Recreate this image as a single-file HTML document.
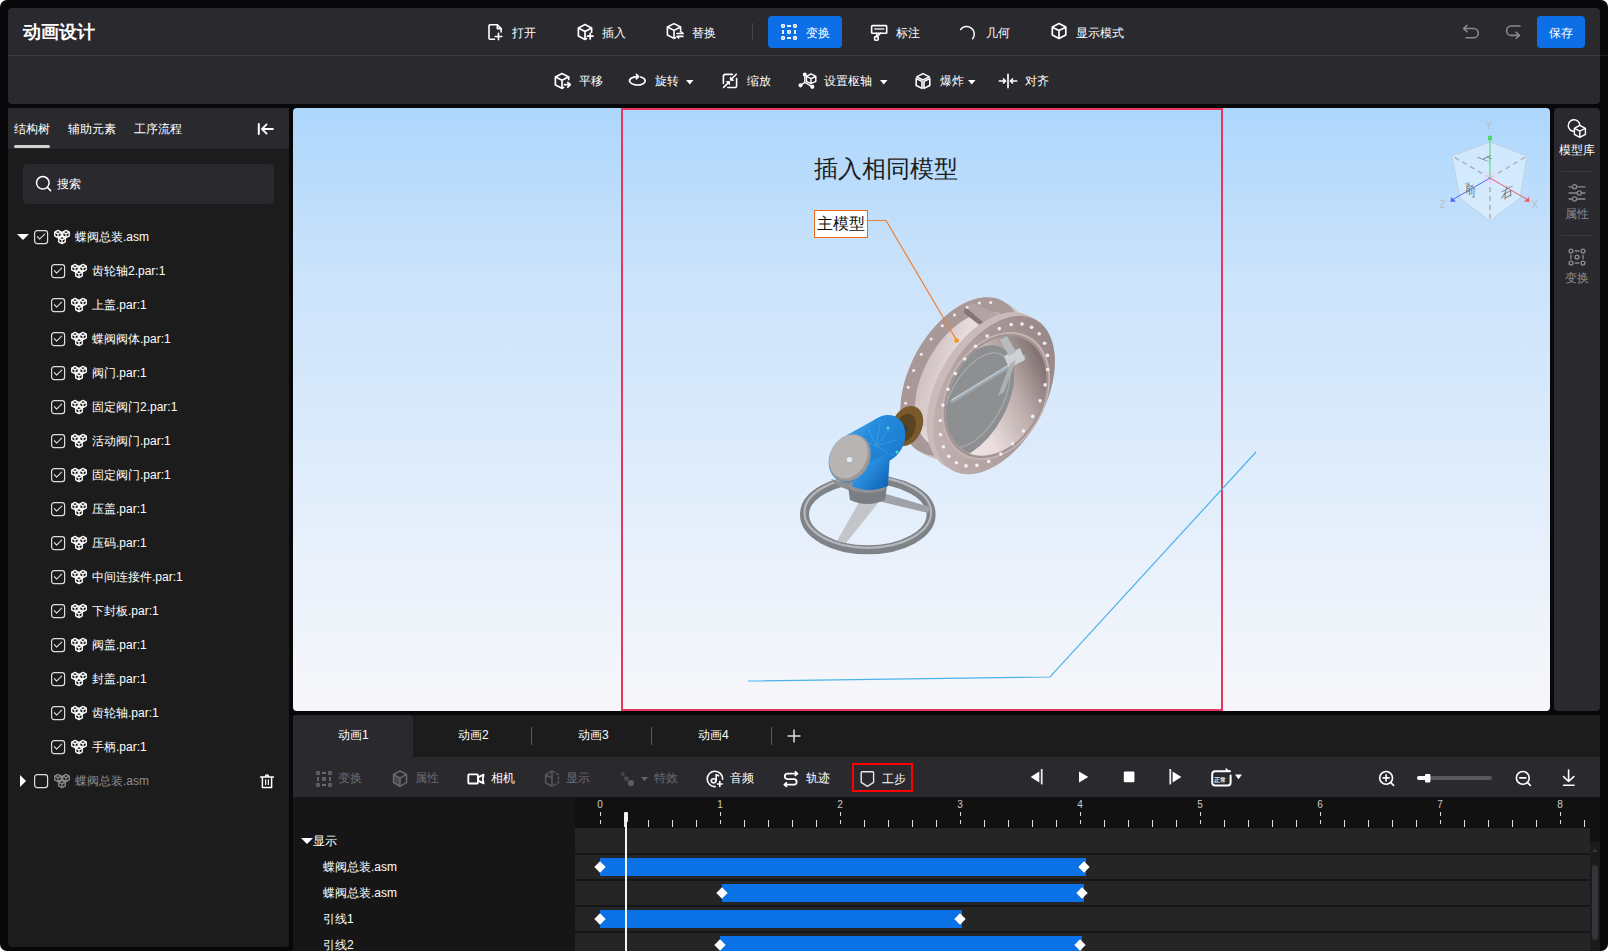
<!DOCTYPE html>
<html><head><meta charset="utf-8">
<style>
*{box-sizing:border-box;margin:0;padding:0}
html,body{width:1608px;height:951px;overflow:hidden;background:#fff}
body{font-family:"Liberation Sans",sans-serif;color:#fff;font-size:12px;position:relative}
.abs{position:absolute}
#win{position:absolute;left:0;top:0;width:1608px;height:951px;background:#08080a;border-radius:7px;overflow:hidden}
.t{position:absolute;white-space:nowrap;font-size:12px;line-height:14px}
svg{position:absolute;overflow:visible}
</style></head><body>
<div id="win">
<div class="abs" style="left:8px;top:8px;width:1592px;height:96px;background:#2a292e;border-radius:4px"></div>
<div class="abs" style="left:8px;top:55px;width:1592px;height:1px;background:#3e3e42;"></div>
<div class="abs" style="left:1600px;top:55px;width:8px;height:1px;background:#202022;"></div>
<div class="abs" style="left:8px;top:108px;width:281px;height:839px;background:#1c1c1c;border-radius:0 0 4px 4px"></div>
<div class="abs" style="left:8px;top:108px;width:281px;height:41px;background:#2a292e;"></div>
<div class="abs" style="left:293px;top:108px;width:1257px;height:603px;background:linear-gradient(180deg,#acd6fc 0%,#b3d9fc 5%,#cbe3fb 28%,#d8e9fb 49%,#eaf1fb 77%,#f7f7fa 100%);border-radius:4px;overflow:hidden"></div>
<div class="abs" style="left:1554px;top:108px;width:46px;height:603px;background:#2a292e;border-radius:4px"></div>
<div class="abs" style="left:293px;top:715px;width:1307px;height:236px;background:#161616;"></div>
<div class="abs" style="left:293px;top:715px;width:1307px;height:42px;background:#1c1c1c;"></div>
<div class="abs" style="left:293px;top:715px;width:120px;height:42px;background:#2a292e;border-radius:4px 4px 0 0"></div>
<div class="abs" style="left:293px;top:757px;width:1307px;height:40px;background:#2a292e;"></div>
<div class="t" style="left:23px;top:22px;font-size:18px;line-height:20px;color:#fff;font-weight:bold;">动画设计</div>
<svg style="left:484px;top:20px;" width="24" height="24" viewBox="0 0 24 24"><g fill="none" stroke="#fff" stroke-width="1.6" stroke-linecap="round" stroke-linejoin="round"><path d="M10.5 19.2 H6 Q5 19.2 5 18.2 V5.8 Q5 4.8 6 4.8 H13.3 L17.1 8.6 V12"/><path d="M13.3 4.8 V8.6 H17.1"/><path d="M11.2 16.5 H17.8 M14.5 13.3 V19.8"/></g></svg>
<div class="t" style="left:512px;top:26px;font-size:12px;line-height:14px;color:#fff;font-weight:500;">打开</div>
<svg style="left:574px;top:20px;" width="24" height="24" viewBox="0 0 24 24"><g fill="none" stroke="#fff" stroke-width="1.7" stroke-linecap="round" stroke-linejoin="round"><path d="M17.6 12.2 V8 L11 4.6 L4.4 8 V16 L11 19.4 L12.6 18.6"/><path d="M4.8 8.2 L11 11.4 L17.2 8.2 M11 11.4 V19"/><path d="M13.4 16.2 H19 M16.2 13.4 V19"/></g></svg>
<div class="t" style="left:602px;top:26px;font-size:12px;line-height:14px;color:#fff;font-weight:500;">插入</div>
<svg style="left:663px;top:19px;" width="24" height="24" viewBox="0 0 24 24"><g fill="none" stroke="#fff" stroke-width="1.6" stroke-linecap="round" stroke-linejoin="round"><path d="M17.6 12.6 V8 L11 4.6 L4.4 8 V16 L11 19.4 L12.4 18.7"/><path d="M4.8 8.2 L11 11.4 L17.2 8.2 M11 11.4 V19"/><path d="M14 14.5 H20.2 L18.4 13 M20 17.4 H14 L15.6 18.9"/></g></svg>
<div class="t" style="left:692px;top:26px;font-size:12px;line-height:14px;color:#fff;font-weight:500;">替换</div>
<div class="abs" style="left:752px;top:23px;width:1px;height:17px;background:#444449;"></div>
<div class="abs" style="left:768px;top:16px;width:74px;height:32px;background:#0d6fe5;border-radius:4px"></div>
<svg style="left:777px;top:20px;" width="24" height="24" viewBox="0 0 24 24"><g fill="none" stroke="#fff" stroke-width="1.4" stroke-linecap="round" stroke-linejoin="round"><rect x="4.7" y="4.7" width="2.6" height="2.6" rx="0.7"/><rect x="16.7" y="4.7" width="2.6" height="2.6" rx="0.7"/><rect x="4.7" y="16.7" width="2.6" height="2.6" rx="0.7"/><rect x="16.7" y="16.7" width="2.6" height="2.6" rx="0.7"/><rect x="10.7" y="10.7" width="2.6" height="2.6" rx="0.7"/><path d="M10 6 H14 M10 18 H14 M6 10 V14 M18 10 V14" stroke-linecap="butt" stroke-width="1.8"/></g></svg>
<div class="t" style="left:806px;top:26px;font-size:12px;line-height:14px;color:#fff;font-weight:500;">变换</div>
<svg style="left:867px;top:20px;" width="24" height="24" viewBox="0 0 24 24"><g fill="none" stroke="#fff" stroke-width="1.6" stroke-linecap="round" stroke-linejoin="round"><rect x="4.6" y="5.6" width="15.1" height="7.6" rx="0.8"/><path d="M7.8 9 H16.8" stroke="#ddd" stroke-width="1.5"/><path d="M9.8 13.2 L9.5 16.5 M13.6 13.2 L10.2 16.3"/><rect x="7.6" y="16.6" width="3.6" height="3.6" rx="1"/></g></svg>
<div class="t" style="left:896px;top:26px;font-size:12px;line-height:14px;color:#fff;font-weight:500;">标注</div>
<svg style="left:956px;top:20px;" width="24" height="24" viewBox="0 0 24 24"><g fill="none" stroke="#fff" stroke-width="1.5" stroke-linecap="round" stroke-linejoin="round"><path d="M4.6 9.5 A7.6 7.6 0 0 1 16.7 18.8"/></g></svg>
<div class="t" style="left:986px;top:26px;font-size:12px;line-height:14px;color:#fff;font-weight:500;">几何</div>
<svg style="left:1047px;top:19px;" width="24" height="24" viewBox="0 0 24 24"><g fill="none" stroke="#fff" stroke-width="1.7" stroke-linecap="round" stroke-linejoin="round"><path d="M12 4.6 L18.8 8.1 V16 L12 19.6 L5.3 16 V8.1 Z M5.8 8.4 L12 11.6 L18.3 8.4 M12 11.6 V19.2"/></g></svg>
<div class="t" style="left:1076px;top:26px;font-size:12px;line-height:14px;color:#fff;font-weight:500;">显示模式</div>
<svg style="left:1459px;top:20px;" width="24" height="24" viewBox="0 0 24 24"><g fill="none" stroke="#8a8a8e" stroke-width="1.6" stroke-linecap="round" stroke-linejoin="round"><path d="M8 5.3 L4.6 8.5 L8 11.6 M4.8 8.5 H14.6 A4.6 4.6 0 0 1 14.6 17.8 H7"/></g></svg>
<svg style="left:1501px;top:20px;" width="24" height="24" viewBox="0 0 24 24"><g fill="none" stroke="#8a8a8e" stroke-width="1.6" stroke-linecap="round" stroke-linejoin="round"><path d="M19 6 H10.3 A4.7 4.7 0 0 0 10.3 15.4 H18.2 M15.2 12.4 L18.4 15.4 L15.2 18.5"/></g></svg>
<div class="abs" style="left:1537px;top:16px;width:48px;height:32px;background:#0d6fe5;border-radius:4px"></div>
<div class="t" style="left:1549px;top:26px;font-size:12px;line-height:14px;color:#fff;font-weight:500;">保存</div>
<svg style="left:551px;top:69px;" width="24" height="24" viewBox="0 0 24 24"><g fill="none" stroke="#fff" stroke-width="1.7" stroke-linecap="round" stroke-linejoin="round"><path d="M17.7 10.4 V7.9 L11 4.5 L4.4 7.9 V15.9 L11 19.3 L12.6 18.5"/><path d="M4.8 8.1 L11 11.3 L17.3 8.1 M11 11.3 V19"/><path d="M13.4 15.7 H19.2 M16.8 13.3 L19.3 15.7 L16.8 18.1"/></g></svg>
<div class="t" style="left:579px;top:74px;font-size:12px;line-height:14px;color:#fff;font-weight:500;">平移</div>
<svg style="left:626px;top:69px;" width="24" height="24" viewBox="0 0 24 24"><g fill="none" stroke="#fff" stroke-width="1.6" stroke-linecap="round" stroke-linejoin="round"><path d="M14.7 8 A7.8 4.2 0 1 1 11.8 7.6"/><path d="M10.3 5.3 L12.6 7.6 L10.3 9.8" fill="#fff"/></g></svg>
<div class="t" style="left:655px;top:74px;font-size:12px;line-height:14px;color:#fff;font-weight:500;">旋转</div>
<svg style="left:686px;top:80px;" width="8" height="5" viewBox="0 0 8 5"><path d="M0 0 H7.5 L3.75 4.5 Z" fill="#fff"/></svg>
<svg style="left:718px;top:69px;" width="24" height="24" viewBox="0 0 24 24"><g fill="none" stroke="#fff" stroke-width="1.6" stroke-linecap="round" stroke-linejoin="round"><path d="M14.3 5.4 H7.4 Q5.4 5.4 5.4 7.4 V14.4 M9.8 18.5 H16.6 Q18.6 18.6 18.6 16.6 V9.6"/><path d="M18.3 5.2 L13.2 10.3 M5.6 18.4 L10.8 13.4"/><path d="M12.4 8.6 V11.3 H15.2 Z M11.6 15.4 V12.6 H8.8 Z" fill="#fff" stroke-width="1"/></g></svg>
<div class="t" style="left:747px;top:74px;font-size:12px;line-height:14px;color:#fff;font-weight:500;">缩放</div>
<svg style="left:796px;top:69px;" width="24" height="24" viewBox="0 0 24 24"><g fill="none" stroke="#fff" stroke-width="1.4" stroke-linecap="round" stroke-linejoin="round"><path d="M8.8 5.5 V13.4 L4.5 16.3 M9 13.4 L16.3 17.8"/><circle cx="8.8" cy="5.5" r="1.3" fill="#fff"/><circle cx="4.5" cy="16.3" r="1.4" fill="#fff"/><circle cx="16.3" cy="17.8" r="1.4" fill="#fff"/><path d="M15 4.8 L19.8 7.3 V12.3 L15 14.6 L10.5 12.3 V7.3 Z M10.8 7.5 L15 9.7 L19.5 7.5 M15 9.7 V14.4"/></g></svg>
<div class="t" style="left:824px;top:74px;font-size:12px;line-height:14px;color:#fff;font-weight:500;">设置枢轴</div>
<svg style="left:880px;top:80px;" width="8" height="5" viewBox="0 0 8 5"><path d="M0 0 H7.5 L3.75 4.5 Z" fill="#fff"/></svg>
<svg style="left:911px;top:69px;" width="24" height="24" viewBox="0 0 24 24"><g fill="none" stroke="#fff" stroke-width="1.6" stroke-linecap="round" stroke-linejoin="round"><path d="M12 4.6 L18.4 7.9 L12 11 L5.6 7.9 Z"/><path d="M5.2 9.6 L11 12.4 V19.4 L5.2 16.5 Z M18.8 9.6 L13 12.4 V19.4 L18.8 16.5 Z"/></g></svg>
<div class="t" style="left:940px;top:74px;font-size:12px;line-height:14px;color:#fff;font-weight:500;">爆炸</div>
<svg style="left:968px;top:80px;" width="8" height="5" viewBox="0 0 8 5"><path d="M0 0 H7.5 L3.75 4.5 Z" fill="#fff"/></svg>
<svg style="left:996px;top:69px;" width="24" height="24" viewBox="0 0 24 24"><g fill="none" stroke="#fff" stroke-width="1.7" stroke-linecap="round" stroke-linejoin="round"><path d="M12 5.6 V18.6" stroke="#ddd" stroke-width="2"/><path d="M3.4 12 H9.2 M7.5 10 L9.6 12 L7.5 14 M20.6 12 H14.8 M16.5 10 L14.4 12 L16.5 14"/></g></svg>
<div class="t" style="left:1025px;top:74px;font-size:12px;line-height:14px;color:#fff;font-weight:500;">对齐</div>
<div class="t" style="left:14px;top:122px;font-size:12px;line-height:14px;color:#fff;font-weight:500;">结构树</div>
<div class="t" style="left:68px;top:122px;font-size:12px;line-height:14px;color:#fff;font-weight:500;">辅助元素</div>
<div class="t" style="left:134px;top:122px;font-size:12px;line-height:14px;color:#fff;font-weight:500;">工序流程</div>
<div class="abs" style="left:14px;top:145px;width:36px;height:3px;background:#d0d0d0;border-radius:2px"></div>
<svg style="left:253px;top:117px;" width="24" height="24" viewBox="0 0 24 24"><g fill="none" stroke="#fff" stroke-width="1.8" stroke-linecap="round" stroke-linejoin="round"><path d="M5.8 7 V17" stroke-width="2"/><path d="M13.6 7.4 L9 12 L13.6 16.6 M9.2 12 H20"/></g></svg>
<div class="abs" style="left:23px;top:164px;width:251px;height:40px;background:#2a292e;border-radius:4px"></div>
<svg style="left:31px;top:171px;" width="24" height="24" viewBox="0 0 24 24"><g fill="none" stroke="#fff" stroke-width="1.5" stroke-linecap="round" stroke-linejoin="round"><circle cx="11.8" cy="11.8" r="6.3"/><path d="M16.6 16.6 L19.6 19.6"/></g></svg>
<div class="t" style="left:57px;top:177px;font-size:12px;line-height:14px;color:#fff;font-weight:500;">搜索</div>
<svg style="left:17px;top:234px;" width="12" height="6" viewBox="0 0 12 6"><path d="M0 0 H12 L6 6 Z" fill="#fff"/></svg>
<svg style="left:34px;top:230px;" width="14" height="14" viewBox="0 0 14 14"><rect x="0.6" y="0.6" width="13" height="13" rx="2.6" fill="none" stroke="#ddd" stroke-width="1.2"/><path d="M3.4 6.6 L5.6 9.2 L10.7 4.2" fill="none" stroke="#ddd" stroke-width="1.1" stroke-linecap="round" stroke-linejoin="round"/></svg>
<svg style="left:50px;top:225px;" width="24" height="24" viewBox="0 0 24 24"><g fill="none" stroke="#fff" stroke-width="1.3" stroke-linecap="round" stroke-linejoin="round"><path d="M8 5.4 L11.3 7.1 V10.9 L8 12.6 L4.7 10.9 V7.1 Z M4.9 7.2 L8 8.8 L11.1 7.2 M8 8.8 V12.4"/><path d="M16 5.4 L19.3 7.1 V10.9 L16 12.6 L12.7 10.9 V7.1 Z M12.9 7.2 L16 8.8 L19.1 7.2 M16 8.8 V12.4"/><path d="M12 11.4 L15.3 13.1 V16.9 L12 18.6 L8.7 16.9 V13.1 Z M8.9 13.2 L12 14.8 L15.1 13.2 M12 14.8 V18.4"/></g></svg>
<div class="t" style="left:75px;top:230px;font-size:12px;line-height:14px;color:#fff;font-weight:500;">蝶阀总装.asm</div>
<svg style="left:51px;top:264px;" width="14" height="14" viewBox="0 0 14 14"><rect x="0.6" y="0.6" width="13" height="13" rx="2.6" fill="none" stroke="#ddd" stroke-width="1.2"/><path d="M3.4 6.6 L5.6 9.2 L10.7 4.2" fill="none" stroke="#ddd" stroke-width="1.1" stroke-linecap="round" stroke-linejoin="round"/></svg>
<svg style="left:67px;top:259px;" width="24" height="24" viewBox="0 0 24 24"><g fill="none" stroke="#fff" stroke-width="1.3" stroke-linecap="round" stroke-linejoin="round"><path d="M8 5.4 L11.3 7.1 V10.9 L8 12.6 L4.7 10.9 V7.1 Z M4.9 7.2 L8 8.8 L11.1 7.2 M8 8.8 V12.4"/><path d="M16 5.4 L19.3 7.1 V10.9 L16 12.6 L12.7 10.9 V7.1 Z M12.9 7.2 L16 8.8 L19.1 7.2 M16 8.8 V12.4"/><path d="M12 11.4 L15.3 13.1 V16.9 L12 18.6 L8.7 16.9 V13.1 Z M8.9 13.2 L12 14.8 L15.1 13.2 M12 14.8 V18.4"/></g></svg>
<div class="t" style="left:92px;top:264px;font-size:12px;line-height:14px;color:#fff;font-weight:500;">齿轮轴2.par:1</div>
<svg style="left:51px;top:298px;" width="14" height="14" viewBox="0 0 14 14"><rect x="0.6" y="0.6" width="13" height="13" rx="2.6" fill="none" stroke="#ddd" stroke-width="1.2"/><path d="M3.4 6.6 L5.6 9.2 L10.7 4.2" fill="none" stroke="#ddd" stroke-width="1.1" stroke-linecap="round" stroke-linejoin="round"/></svg>
<svg style="left:67px;top:293px;" width="24" height="24" viewBox="0 0 24 24"><g fill="none" stroke="#fff" stroke-width="1.3" stroke-linecap="round" stroke-linejoin="round"><path d="M8 5.4 L11.3 7.1 V10.9 L8 12.6 L4.7 10.9 V7.1 Z M4.9 7.2 L8 8.8 L11.1 7.2 M8 8.8 V12.4"/><path d="M16 5.4 L19.3 7.1 V10.9 L16 12.6 L12.7 10.9 V7.1 Z M12.9 7.2 L16 8.8 L19.1 7.2 M16 8.8 V12.4"/><path d="M12 11.4 L15.3 13.1 V16.9 L12 18.6 L8.7 16.9 V13.1 Z M8.9 13.2 L12 14.8 L15.1 13.2 M12 14.8 V18.4"/></g></svg>
<div class="t" style="left:92px;top:298px;font-size:12px;line-height:14px;color:#fff;font-weight:500;">上盖.par:1</div>
<svg style="left:51px;top:332px;" width="14" height="14" viewBox="0 0 14 14"><rect x="0.6" y="0.6" width="13" height="13" rx="2.6" fill="none" stroke="#ddd" stroke-width="1.2"/><path d="M3.4 6.6 L5.6 9.2 L10.7 4.2" fill="none" stroke="#ddd" stroke-width="1.1" stroke-linecap="round" stroke-linejoin="round"/></svg>
<svg style="left:67px;top:327px;" width="24" height="24" viewBox="0 0 24 24"><g fill="none" stroke="#fff" stroke-width="1.3" stroke-linecap="round" stroke-linejoin="round"><path d="M8 5.4 L11.3 7.1 V10.9 L8 12.6 L4.7 10.9 V7.1 Z M4.9 7.2 L8 8.8 L11.1 7.2 M8 8.8 V12.4"/><path d="M16 5.4 L19.3 7.1 V10.9 L16 12.6 L12.7 10.9 V7.1 Z M12.9 7.2 L16 8.8 L19.1 7.2 M16 8.8 V12.4"/><path d="M12 11.4 L15.3 13.1 V16.9 L12 18.6 L8.7 16.9 V13.1 Z M8.9 13.2 L12 14.8 L15.1 13.2 M12 14.8 V18.4"/></g></svg>
<div class="t" style="left:92px;top:332px;font-size:12px;line-height:14px;color:#fff;font-weight:500;">蝶阀阀体.par:1</div>
<svg style="left:51px;top:366px;" width="14" height="14" viewBox="0 0 14 14"><rect x="0.6" y="0.6" width="13" height="13" rx="2.6" fill="none" stroke="#ddd" stroke-width="1.2"/><path d="M3.4 6.6 L5.6 9.2 L10.7 4.2" fill="none" stroke="#ddd" stroke-width="1.1" stroke-linecap="round" stroke-linejoin="round"/></svg>
<svg style="left:67px;top:361px;" width="24" height="24" viewBox="0 0 24 24"><g fill="none" stroke="#fff" stroke-width="1.3" stroke-linecap="round" stroke-linejoin="round"><path d="M8 5.4 L11.3 7.1 V10.9 L8 12.6 L4.7 10.9 V7.1 Z M4.9 7.2 L8 8.8 L11.1 7.2 M8 8.8 V12.4"/><path d="M16 5.4 L19.3 7.1 V10.9 L16 12.6 L12.7 10.9 V7.1 Z M12.9 7.2 L16 8.8 L19.1 7.2 M16 8.8 V12.4"/><path d="M12 11.4 L15.3 13.1 V16.9 L12 18.6 L8.7 16.9 V13.1 Z M8.9 13.2 L12 14.8 L15.1 13.2 M12 14.8 V18.4"/></g></svg>
<div class="t" style="left:92px;top:366px;font-size:12px;line-height:14px;color:#fff;font-weight:500;">阀门.par:1</div>
<svg style="left:51px;top:400px;" width="14" height="14" viewBox="0 0 14 14"><rect x="0.6" y="0.6" width="13" height="13" rx="2.6" fill="none" stroke="#ddd" stroke-width="1.2"/><path d="M3.4 6.6 L5.6 9.2 L10.7 4.2" fill="none" stroke="#ddd" stroke-width="1.1" stroke-linecap="round" stroke-linejoin="round"/></svg>
<svg style="left:67px;top:395px;" width="24" height="24" viewBox="0 0 24 24"><g fill="none" stroke="#fff" stroke-width="1.3" stroke-linecap="round" stroke-linejoin="round"><path d="M8 5.4 L11.3 7.1 V10.9 L8 12.6 L4.7 10.9 V7.1 Z M4.9 7.2 L8 8.8 L11.1 7.2 M8 8.8 V12.4"/><path d="M16 5.4 L19.3 7.1 V10.9 L16 12.6 L12.7 10.9 V7.1 Z M12.9 7.2 L16 8.8 L19.1 7.2 M16 8.8 V12.4"/><path d="M12 11.4 L15.3 13.1 V16.9 L12 18.6 L8.7 16.9 V13.1 Z M8.9 13.2 L12 14.8 L15.1 13.2 M12 14.8 V18.4"/></g></svg>
<div class="t" style="left:92px;top:400px;font-size:12px;line-height:14px;color:#fff;font-weight:500;">固定阀门2.par:1</div>
<svg style="left:51px;top:434px;" width="14" height="14" viewBox="0 0 14 14"><rect x="0.6" y="0.6" width="13" height="13" rx="2.6" fill="none" stroke="#ddd" stroke-width="1.2"/><path d="M3.4 6.6 L5.6 9.2 L10.7 4.2" fill="none" stroke="#ddd" stroke-width="1.1" stroke-linecap="round" stroke-linejoin="round"/></svg>
<svg style="left:67px;top:429px;" width="24" height="24" viewBox="0 0 24 24"><g fill="none" stroke="#fff" stroke-width="1.3" stroke-linecap="round" stroke-linejoin="round"><path d="M8 5.4 L11.3 7.1 V10.9 L8 12.6 L4.7 10.9 V7.1 Z M4.9 7.2 L8 8.8 L11.1 7.2 M8 8.8 V12.4"/><path d="M16 5.4 L19.3 7.1 V10.9 L16 12.6 L12.7 10.9 V7.1 Z M12.9 7.2 L16 8.8 L19.1 7.2 M16 8.8 V12.4"/><path d="M12 11.4 L15.3 13.1 V16.9 L12 18.6 L8.7 16.9 V13.1 Z M8.9 13.2 L12 14.8 L15.1 13.2 M12 14.8 V18.4"/></g></svg>
<div class="t" style="left:92px;top:434px;font-size:12px;line-height:14px;color:#fff;font-weight:500;">活动阀门.par:1</div>
<svg style="left:51px;top:468px;" width="14" height="14" viewBox="0 0 14 14"><rect x="0.6" y="0.6" width="13" height="13" rx="2.6" fill="none" stroke="#ddd" stroke-width="1.2"/><path d="M3.4 6.6 L5.6 9.2 L10.7 4.2" fill="none" stroke="#ddd" stroke-width="1.1" stroke-linecap="round" stroke-linejoin="round"/></svg>
<svg style="left:67px;top:463px;" width="24" height="24" viewBox="0 0 24 24"><g fill="none" stroke="#fff" stroke-width="1.3" stroke-linecap="round" stroke-linejoin="round"><path d="M8 5.4 L11.3 7.1 V10.9 L8 12.6 L4.7 10.9 V7.1 Z M4.9 7.2 L8 8.8 L11.1 7.2 M8 8.8 V12.4"/><path d="M16 5.4 L19.3 7.1 V10.9 L16 12.6 L12.7 10.9 V7.1 Z M12.9 7.2 L16 8.8 L19.1 7.2 M16 8.8 V12.4"/><path d="M12 11.4 L15.3 13.1 V16.9 L12 18.6 L8.7 16.9 V13.1 Z M8.9 13.2 L12 14.8 L15.1 13.2 M12 14.8 V18.4"/></g></svg>
<div class="t" style="left:92px;top:468px;font-size:12px;line-height:14px;color:#fff;font-weight:500;">固定阀门.par:1</div>
<svg style="left:51px;top:502px;" width="14" height="14" viewBox="0 0 14 14"><rect x="0.6" y="0.6" width="13" height="13" rx="2.6" fill="none" stroke="#ddd" stroke-width="1.2"/><path d="M3.4 6.6 L5.6 9.2 L10.7 4.2" fill="none" stroke="#ddd" stroke-width="1.1" stroke-linecap="round" stroke-linejoin="round"/></svg>
<svg style="left:67px;top:497px;" width="24" height="24" viewBox="0 0 24 24"><g fill="none" stroke="#fff" stroke-width="1.3" stroke-linecap="round" stroke-linejoin="round"><path d="M8 5.4 L11.3 7.1 V10.9 L8 12.6 L4.7 10.9 V7.1 Z M4.9 7.2 L8 8.8 L11.1 7.2 M8 8.8 V12.4"/><path d="M16 5.4 L19.3 7.1 V10.9 L16 12.6 L12.7 10.9 V7.1 Z M12.9 7.2 L16 8.8 L19.1 7.2 M16 8.8 V12.4"/><path d="M12 11.4 L15.3 13.1 V16.9 L12 18.6 L8.7 16.9 V13.1 Z M8.9 13.2 L12 14.8 L15.1 13.2 M12 14.8 V18.4"/></g></svg>
<div class="t" style="left:92px;top:502px;font-size:12px;line-height:14px;color:#fff;font-weight:500;">压盖.par:1</div>
<svg style="left:51px;top:536px;" width="14" height="14" viewBox="0 0 14 14"><rect x="0.6" y="0.6" width="13" height="13" rx="2.6" fill="none" stroke="#ddd" stroke-width="1.2"/><path d="M3.4 6.6 L5.6 9.2 L10.7 4.2" fill="none" stroke="#ddd" stroke-width="1.1" stroke-linecap="round" stroke-linejoin="round"/></svg>
<svg style="left:67px;top:531px;" width="24" height="24" viewBox="0 0 24 24"><g fill="none" stroke="#fff" stroke-width="1.3" stroke-linecap="round" stroke-linejoin="round"><path d="M8 5.4 L11.3 7.1 V10.9 L8 12.6 L4.7 10.9 V7.1 Z M4.9 7.2 L8 8.8 L11.1 7.2 M8 8.8 V12.4"/><path d="M16 5.4 L19.3 7.1 V10.9 L16 12.6 L12.7 10.9 V7.1 Z M12.9 7.2 L16 8.8 L19.1 7.2 M16 8.8 V12.4"/><path d="M12 11.4 L15.3 13.1 V16.9 L12 18.6 L8.7 16.9 V13.1 Z M8.9 13.2 L12 14.8 L15.1 13.2 M12 14.8 V18.4"/></g></svg>
<div class="t" style="left:92px;top:536px;font-size:12px;line-height:14px;color:#fff;font-weight:500;">压码.par:1</div>
<svg style="left:51px;top:570px;" width="14" height="14" viewBox="0 0 14 14"><rect x="0.6" y="0.6" width="13" height="13" rx="2.6" fill="none" stroke="#ddd" stroke-width="1.2"/><path d="M3.4 6.6 L5.6 9.2 L10.7 4.2" fill="none" stroke="#ddd" stroke-width="1.1" stroke-linecap="round" stroke-linejoin="round"/></svg>
<svg style="left:67px;top:565px;" width="24" height="24" viewBox="0 0 24 24"><g fill="none" stroke="#fff" stroke-width="1.3" stroke-linecap="round" stroke-linejoin="round"><path d="M8 5.4 L11.3 7.1 V10.9 L8 12.6 L4.7 10.9 V7.1 Z M4.9 7.2 L8 8.8 L11.1 7.2 M8 8.8 V12.4"/><path d="M16 5.4 L19.3 7.1 V10.9 L16 12.6 L12.7 10.9 V7.1 Z M12.9 7.2 L16 8.8 L19.1 7.2 M16 8.8 V12.4"/><path d="M12 11.4 L15.3 13.1 V16.9 L12 18.6 L8.7 16.9 V13.1 Z M8.9 13.2 L12 14.8 L15.1 13.2 M12 14.8 V18.4"/></g></svg>
<div class="t" style="left:92px;top:570px;font-size:12px;line-height:14px;color:#fff;font-weight:500;">中间连接件.par:1</div>
<svg style="left:51px;top:604px;" width="14" height="14" viewBox="0 0 14 14"><rect x="0.6" y="0.6" width="13" height="13" rx="2.6" fill="none" stroke="#ddd" stroke-width="1.2"/><path d="M3.4 6.6 L5.6 9.2 L10.7 4.2" fill="none" stroke="#ddd" stroke-width="1.1" stroke-linecap="round" stroke-linejoin="round"/></svg>
<svg style="left:67px;top:599px;" width="24" height="24" viewBox="0 0 24 24"><g fill="none" stroke="#fff" stroke-width="1.3" stroke-linecap="round" stroke-linejoin="round"><path d="M8 5.4 L11.3 7.1 V10.9 L8 12.6 L4.7 10.9 V7.1 Z M4.9 7.2 L8 8.8 L11.1 7.2 M8 8.8 V12.4"/><path d="M16 5.4 L19.3 7.1 V10.9 L16 12.6 L12.7 10.9 V7.1 Z M12.9 7.2 L16 8.8 L19.1 7.2 M16 8.8 V12.4"/><path d="M12 11.4 L15.3 13.1 V16.9 L12 18.6 L8.7 16.9 V13.1 Z M8.9 13.2 L12 14.8 L15.1 13.2 M12 14.8 V18.4"/></g></svg>
<div class="t" style="left:92px;top:604px;font-size:12px;line-height:14px;color:#fff;font-weight:500;">下封板.par:1</div>
<svg style="left:51px;top:638px;" width="14" height="14" viewBox="0 0 14 14"><rect x="0.6" y="0.6" width="13" height="13" rx="2.6" fill="none" stroke="#ddd" stroke-width="1.2"/><path d="M3.4 6.6 L5.6 9.2 L10.7 4.2" fill="none" stroke="#ddd" stroke-width="1.1" stroke-linecap="round" stroke-linejoin="round"/></svg>
<svg style="left:67px;top:633px;" width="24" height="24" viewBox="0 0 24 24"><g fill="none" stroke="#fff" stroke-width="1.3" stroke-linecap="round" stroke-linejoin="round"><path d="M8 5.4 L11.3 7.1 V10.9 L8 12.6 L4.7 10.9 V7.1 Z M4.9 7.2 L8 8.8 L11.1 7.2 M8 8.8 V12.4"/><path d="M16 5.4 L19.3 7.1 V10.9 L16 12.6 L12.7 10.9 V7.1 Z M12.9 7.2 L16 8.8 L19.1 7.2 M16 8.8 V12.4"/><path d="M12 11.4 L15.3 13.1 V16.9 L12 18.6 L8.7 16.9 V13.1 Z M8.9 13.2 L12 14.8 L15.1 13.2 M12 14.8 V18.4"/></g></svg>
<div class="t" style="left:92px;top:638px;font-size:12px;line-height:14px;color:#fff;font-weight:500;">阀盖.par:1</div>
<svg style="left:51px;top:672px;" width="14" height="14" viewBox="0 0 14 14"><rect x="0.6" y="0.6" width="13" height="13" rx="2.6" fill="none" stroke="#ddd" stroke-width="1.2"/><path d="M3.4 6.6 L5.6 9.2 L10.7 4.2" fill="none" stroke="#ddd" stroke-width="1.1" stroke-linecap="round" stroke-linejoin="round"/></svg>
<svg style="left:67px;top:667px;" width="24" height="24" viewBox="0 0 24 24"><g fill="none" stroke="#fff" stroke-width="1.3" stroke-linecap="round" stroke-linejoin="round"><path d="M8 5.4 L11.3 7.1 V10.9 L8 12.6 L4.7 10.9 V7.1 Z M4.9 7.2 L8 8.8 L11.1 7.2 M8 8.8 V12.4"/><path d="M16 5.4 L19.3 7.1 V10.9 L16 12.6 L12.7 10.9 V7.1 Z M12.9 7.2 L16 8.8 L19.1 7.2 M16 8.8 V12.4"/><path d="M12 11.4 L15.3 13.1 V16.9 L12 18.6 L8.7 16.9 V13.1 Z M8.9 13.2 L12 14.8 L15.1 13.2 M12 14.8 V18.4"/></g></svg>
<div class="t" style="left:92px;top:672px;font-size:12px;line-height:14px;color:#fff;font-weight:500;">封盖.par:1</div>
<svg style="left:51px;top:706px;" width="14" height="14" viewBox="0 0 14 14"><rect x="0.6" y="0.6" width="13" height="13" rx="2.6" fill="none" stroke="#ddd" stroke-width="1.2"/><path d="M3.4 6.6 L5.6 9.2 L10.7 4.2" fill="none" stroke="#ddd" stroke-width="1.1" stroke-linecap="round" stroke-linejoin="round"/></svg>
<svg style="left:67px;top:701px;" width="24" height="24" viewBox="0 0 24 24"><g fill="none" stroke="#fff" stroke-width="1.3" stroke-linecap="round" stroke-linejoin="round"><path d="M8 5.4 L11.3 7.1 V10.9 L8 12.6 L4.7 10.9 V7.1 Z M4.9 7.2 L8 8.8 L11.1 7.2 M8 8.8 V12.4"/><path d="M16 5.4 L19.3 7.1 V10.9 L16 12.6 L12.7 10.9 V7.1 Z M12.9 7.2 L16 8.8 L19.1 7.2 M16 8.8 V12.4"/><path d="M12 11.4 L15.3 13.1 V16.9 L12 18.6 L8.7 16.9 V13.1 Z M8.9 13.2 L12 14.8 L15.1 13.2 M12 14.8 V18.4"/></g></svg>
<div class="t" style="left:92px;top:706px;font-size:12px;line-height:14px;color:#fff;font-weight:500;">齿轮轴.par:1</div>
<svg style="left:51px;top:740px;" width="14" height="14" viewBox="0 0 14 14"><rect x="0.6" y="0.6" width="13" height="13" rx="2.6" fill="none" stroke="#ddd" stroke-width="1.2"/><path d="M3.4 6.6 L5.6 9.2 L10.7 4.2" fill="none" stroke="#ddd" stroke-width="1.1" stroke-linecap="round" stroke-linejoin="round"/></svg>
<svg style="left:67px;top:735px;" width="24" height="24" viewBox="0 0 24 24"><g fill="none" stroke="#fff" stroke-width="1.3" stroke-linecap="round" stroke-linejoin="round"><path d="M8 5.4 L11.3 7.1 V10.9 L8 12.6 L4.7 10.9 V7.1 Z M4.9 7.2 L8 8.8 L11.1 7.2 M8 8.8 V12.4"/><path d="M16 5.4 L19.3 7.1 V10.9 L16 12.6 L12.7 10.9 V7.1 Z M12.9 7.2 L16 8.8 L19.1 7.2 M16 8.8 V12.4"/><path d="M12 11.4 L15.3 13.1 V16.9 L12 18.6 L8.7 16.9 V13.1 Z M8.9 13.2 L12 14.8 L15.1 13.2 M12 14.8 V18.4"/></g></svg>
<div class="t" style="left:92px;top:740px;font-size:12px;line-height:14px;color:#fff;font-weight:500;">手柄.par:1</div>
<svg style="left:20px;top:775px;" width="6" height="12" viewBox="0 0 6 12"><path d="M0 0 L6 6 L0 12 Z" fill="#fff"/></svg>
<svg style="left:34px;top:774px;" width="14" height="14" viewBox="0 0 14 14"><rect x="0.6" y="0.6" width="13" height="13" rx="2.6" fill="none" stroke="#ddd" stroke-width="1.2"/></svg>
<svg style="left:50px;top:769px;" width="24" height="24" viewBox="0 0 24 24"><g fill="none" stroke="#8a8a8a" stroke-width="1.3" stroke-linecap="round" stroke-linejoin="round"><path d="M8 5.4 L11.3 7.1 V10.9 L8 12.6 L4.7 10.9 V7.1 Z M4.9 7.2 L8 8.8 L11.1 7.2 M8 8.8 V12.4"/><path d="M16 5.4 L19.3 7.1 V10.9 L16 12.6 L12.7 10.9 V7.1 Z M12.9 7.2 L16 8.8 L19.1 7.2 M16 8.8 V12.4"/><path d="M12 11.4 L15.3 13.1 V16.9 L12 18.6 L8.7 16.9 V13.1 Z M8.9 13.2 L12 14.8 L15.1 13.2 M12 14.8 V18.4"/></g></svg>
<div class="t" style="left:75px;top:774px;font-size:12px;line-height:14px;color:#8c8c8c;font-weight:500;">蝶阀总装.asm</div>
<svg style="left:255px;top:768px;" width="24" height="24" viewBox="0 0 24 24"><g fill="none" stroke="#fff" stroke-width="1.5" stroke-linecap="round" stroke-linejoin="round"><path d="M5.6 9 H18.4 M10.4 8.6 Q10.6 6.9 12 6.9 Q13.4 6.9 13.6 8.6"/><path d="M7.4 9.4 V19.4 H16.6 V9.4"/><path d="M10.6 11.8 V16.4 M13.4 11.8 V16.4" stroke-width="1.2"/></g></svg>
<svg style="left:1565px;top:116px;" width="24" height="24" viewBox="0 0 24 24"><g fill="none" stroke="#fff" stroke-width="1.4" stroke-linecap="round" stroke-linejoin="round"><path d="M9.4 15.3 A5.8 5.8 0 1 1 14.8 9.2"/><path d="M14.8 9.3 L20.4 12.3 V18.3 L14.8 21.3 L9.4 18.3 V12.3 Z M9.8 12.5 L14.8 15.2 L20 12.5 M14.8 15.2 V21"/></g></svg>
<div class="t" style="left:1559px;top:143px;font-size:12px;line-height:14px;color:#fff;font-weight:500;">模型库</div>
<div class="abs" style="left:1561px;top:171px;width:32px;height:1px;background:#3a393f;"></div>
<svg style="left:1565px;top:181px;" width="24" height="24" viewBox="0 0 24 24"><g fill="none" stroke="#8a8a8e" stroke-width="1.3" stroke-linecap="round" stroke-linejoin="round"><path d="M4 5.8 H7.4 M11.6 5.8 H20 M4 12 H12.2 M16.4 12 H20 M4 18 H7.4 M11.6 18 H20"/><circle cx="9.5" cy="5.8" r="2.1"/><circle cx="14.3" cy="12" r="2.1"/><circle cx="9.5" cy="18" r="2.1"/></g></svg>
<div class="t" style="left:1565px;top:207px;font-size:12px;line-height:14px;color:#8a8a8e;font-weight:500;">属性</div>
<div class="abs" style="left:1561px;top:235px;width:32px;height:1px;background:#3a393f;"></div>
<svg style="left:1565px;top:245px;" width="24" height="24" viewBox="0 0 24 24"><g fill="none" stroke="#8a8a8e" stroke-width="1.4" stroke-linecap="round" stroke-linejoin="round"><circle cx="6" cy="6" r="1.9"/><circle cx="18" cy="6" r="1.9"/><circle cx="6" cy="18" r="1.9"/><circle cx="18" cy="18" r="1.9"/><circle cx="12" cy="12" r="1.9"/><path d="M10.2 6 H13.8 M10.2 18 H13.8 M6 10.2 V13.8 M18 10.2 V13.8"/></g></svg>
<div class="t" style="left:1565px;top:271px;font-size:12px;line-height:14px;color:#8a8a8e;font-weight:500;">变换</div>
<div class="t" style="left:338px;top:728px;font-size:12px;line-height:14px;color:#fff;font-weight:500;">动画1</div>
<div class="t" style="left:458px;top:728px;font-size:12px;line-height:14px;color:#fff;font-weight:500;">动画2</div>
<div class="t" style="left:578px;top:728px;font-size:12px;line-height:14px;color:#fff;font-weight:500;">动画3</div>
<div class="t" style="left:698px;top:728px;font-size:12px;line-height:14px;color:#fff;font-weight:500;">动画4</div>
<div class="abs" style="left:531px;top:727px;width:1px;height:18px;background:#5a5a5e;"></div>
<div class="abs" style="left:651px;top:727px;width:1px;height:18px;background:#5a5a5e;"></div>
<div class="abs" style="left:771px;top:727px;width:1px;height:18px;background:#5a5a5e;"></div>
<svg style="left:785px;top:727px;" width="18" height="18" viewBox="0 0 18 18"><path d="M9 2.5 V15.5 M2.5 9 H15.5" stroke="#ddd" stroke-width="1.5" fill="none"/></svg>
<svg style="left:312px;top:765px;" width="24" height="24" viewBox="0 0 24 24"><g fill="none" stroke="#6a6a6e" stroke-width="1.4" stroke-linecap="round" stroke-linejoin="round"><rect x="4.7" y="6.7" width="2.6" height="2.6" rx="0.7"/><rect x="16.7" y="6.7" width="2.6" height="2.6" rx="0.7"/><rect x="4.7" y="18.7" width="2.6" height="2.6" rx="0.7"/><rect x="16.7" y="18.7" width="2.6" height="2.6" rx="0.7"/><rect x="10.7" y="12.7" width="2.6" height="2.6" rx="0.7"/><path d="M10 8 H14 M10 20 H14 M6 12 V16 M18 12 V16" stroke-linecap="butt" stroke-width="1.8"/></g></svg>
<div class="t" style="left:338px;top:771px;font-size:12px;line-height:14px;color:#6a6a6e;font-weight:500;">变换</div>
<svg style="left:388px;top:765px;" width="24" height="24" viewBox="0 0 24 24"><path d="M5.6 9.6 L12 13.2 V21.2 L5.6 17.6 Z" fill="#4a4a4e"/><g fill="none" stroke="#6a6a6e" stroke-width="1.5" stroke-linecap="round" stroke-linejoin="round"><path d="M12 6 L18.5 9.5 V17.6 L12 21.3 L5.5 17.6 V9.5 Z M5.9 9.7 L12 13.1 L18.1 9.7 M12 13.1 V21"/></g></svg>
<div class="t" style="left:415px;top:771px;font-size:12px;line-height:14px;color:#6a6a6e;font-weight:500;">属性</div>
<svg style="left:464px;top:765px;" width="24" height="24" viewBox="0 0 24 24"><g fill="none" stroke="#fff" stroke-width="1.8" stroke-linecap="round" stroke-linejoin="round"><rect x="4.3" y="9.3" width="9.6" height="9.2" rx="0.8"/><path d="M14.2 12.4 L19.6 9.6 Q18 14 19.6 18.4 L14.2 15.6 Z"/></g></svg>
<div class="t" style="left:491px;top:771px;font-size:12px;line-height:14px;color:#fff;font-weight:500;">相机</div>
<svg style="left:540px;top:765px;" width="24" height="24" viewBox="0 0 24 24"><g fill="none" stroke="#55555a" stroke-width="1.6" stroke-linecap="round" stroke-linejoin="round"><path d="M12 6 V21.4 L5.6 17.8 V9.6 Z M5.8 9.8 L12 13.4"/><path d="M12.8 6.4 L18.4 9.6 V17.8 L12.8 21" stroke-dasharray="2 2.4"/></g></svg>
<div class="t" style="left:566px;top:771px;font-size:12px;line-height:14px;color:#6a6a6e;font-weight:500;">显示</div>
<svg style="left:614px;top:765px;" width="36" height="24" viewBox="0 0 36 24"><circle cx="8.8" cy="8.9" r="2" fill="#454549"/><circle cx="12.4" cy="13.6" r="2.4" fill="#4d4d51"/><circle cx="16.9" cy="18" r="3" fill="#606064"/><path d="M27 12 H34 L30.5 16 Z" fill="#666"/></svg>
<div class="t" style="left:654px;top:771px;font-size:12px;line-height:14px;color:#6a6a6e;font-weight:500;">特效</div>
<svg style="left:703px;top:765px;" width="24" height="24" viewBox="0 0 24 24"><g fill="none" stroke="#fff" stroke-width="1.6" stroke-linecap="round" stroke-linejoin="round"><path d="M19.6 14.2 A7.7 7.7 0 1 0 12.2 21.6"/><path d="M13.2 15.6 V9.6 L15.6 10.8"/><ellipse cx="10.6" cy="15.8" rx="2.3" ry="2" /><path d="M14.4 19 H19.2 M16.8 16.6 V21.4"/></g></svg>
<div class="t" style="left:730px;top:771px;font-size:12px;line-height:14px;color:#fff;font-weight:500;">音频</div>
<svg style="left:779px;top:765px;" width="24" height="24" viewBox="0 0 24 24"><g fill="none" stroke="#fff" stroke-width="1.8" stroke-linecap="round" stroke-linejoin="round"><path d="M18 8.6 H8.6 A2.8 2.8 0 0 0 8.6 14.2 H15.6 A2.8 2.8 0 0 1 15.6 19.6 H5.8"/><path d="M16.4 6.8 L18.4 8.6 L16.4 10.4 M7.4 17.8 L5.4 19.6 L7.4 21.4"/></g></svg>
<div class="t" style="left:806px;top:771px;font-size:12px;line-height:14px;color:#fff;font-weight:500;">轨迹</div>
<div class="abs" style="left:852px;top:763px;width:61px;height:29px;border:2px solid #ff0000"></div>
<svg style="left:848px;top:760px;" width="70" height="35" viewBox="0 0 70 35"><g fill="none" stroke="#e8e8e8" stroke-width="1.4" stroke-linecap="round" stroke-linejoin="round"><path d="M13.2 12.6 Q13.2 11.8 14 11.8 H24.8 Q25.6 11.8 25.6 12.6 V22.4 L19.4 26.4 L13.2 22.4 Z"/></g></svg>
<div class="t" style="left:882px;top:772px;font-size:12px;line-height:14px;color:#fff;font-weight:500;">工步</div>
<svg style="left:1024px;top:765px;" width="164" height="24" viewBox="0 0 164 24"><path d="M6.6 12 L15.3 6.6 V17.4 Z" fill="#fff"/><rect x="16.8" y="4" width="1.8" height="15.4" fill="#f0e8e8"/><path d="M55 6.6 L64.3 12 L55 17.4 Z" fill="#fff"/><rect x="99.8" y="6.6" width="10.6" height="10.6" rx="1" fill="#fff"/><rect x="145.4" y="4" width="1.8" height="15.4" fill="#f0e8e8"/><path d="M148.6 6.6 L157.4 12 L148.6 17.4 Z" fill="#fff"/></svg>
<svg style="left:1205px;top:762px;" width="44" height="30" viewBox="0 0 44 30"><g fill="none" stroke="#fff" stroke-width="2" stroke-linecap="round" stroke-linejoin="round"><path d="M25 9.2 H10.2 Q7.2 9.2 7.2 12.2 V20.6 Q7.2 23.6 10.2 23.6 H22.8 Q25.6 23.6 25.6 20.6 V13.6"/></g><path d="M20.6 5.8 L25.2 9.4 L20.6 9.9 Z" fill="#fff"/><path d="M30 12.6 H37 L33.5 17.3 Z" fill="#fff"/><text x="9.4" y="19.6" font-size="6" fill="#eee" font-weight="bold">正常</text></svg>
<svg style="left:1372px;top:762px;" width="210" height="30" viewBox="0 0 210 30"><g fill="none" stroke="#fff" stroke-width="1.6" stroke-linecap="round" stroke-linejoin="round"><circle cx="14.1" cy="15.9" r="6.4"/><path d="M18.8 20.6 L21.6 23.4 M11.1 15.9 H17.1 M14.1 12.9 V18.9"/></g><rect x="45" y="14" width="75" height="4" rx="2" fill="#59595d"/><rect x="45" y="14" width="11" height="4" rx="2" fill="#fff"/><rect x="53" y="12" width="5.4" height="8.6" rx="1" fill="#fff"/><g fill="none" stroke="#fff" stroke-width="1.6" stroke-linecap="round" stroke-linejoin="round"><circle cx="150.8" cy="15.9" r="6.4"/><path d="M155.5 20.6 L158.3 23.4 M147.8 15.9 H153.8"/></g><g fill="none" stroke="#fff" stroke-width="1.6" stroke-linecap="round" stroke-linejoin="round"><path d="M196.6 8 V19.5 M191.6 14.6 L196.6 19.5 L201.8 14.6 M191.6 23.2 H202" /></g></svg>
<div class="abs" style="left:575px;top:797px;width:1025px;height:45px;background:#111111;"></div>
<div class="abs" style="left:1590px;top:842px;width:10px;height:109px;background:#1b1b1b;"></div>
<svg style="left:1590px;top:842px;" width="10" height="109" viewBox="0 0 10 109"><path d="M2 10 L5 7 L8 10 Z" fill="#3a3a3e"/><rect x="2" y="23" width="6" height="75" rx="3" fill="#35343a"/></svg>
<div class="abs" style="left:575px;top:828px;width:1015px;height:25px;background:#252525;"></div>
<div class="abs" style="left:575px;top:855px;width:1015px;height:24px;background:#252525;"></div>
<div class="abs" style="left:575px;top:881px;width:1015px;height:24px;background:#252525;"></div>
<div class="abs" style="left:575px;top:907px;width:1015px;height:24px;background:#252525;"></div>
<div class="abs" style="left:575px;top:933px;width:1015px;height:24px;background:#252525;"></div>
<svg style="left:301px;top:838px;" width="12" height="6" viewBox="0 0 12 6"><path d="M0 0 H12 L6 6 Z" fill="#fff"/></svg>
<div class="t" style="left:313px;top:834px;font-size:12px;line-height:14px;color:#fff;font-weight:500;">显示</div>
<div class="t" style="left:323px;top:860px;font-size:12px;line-height:14px;color:#fff;font-weight:500;">蝶阀总装.asm</div>
<div class="t" style="left:323px;top:886px;font-size:12px;line-height:14px;color:#fff;font-weight:500;">蝶阀总装.asm</div>
<div class="t" style="left:323px;top:912px;font-size:12px;line-height:14px;color:#fff;font-weight:500;">引线1</div>
<div class="t" style="left:323px;top:938px;font-size:12px;line-height:14px;color:#fff;font-weight:500;">引线2</div>
<svg style="left:575px;top:797px;" width="1025" height="32" viewBox="0 0 1025 32"><path d="M25.5 15 V19 M25.5 23 V27" stroke="#ddd" stroke-width="1"/><path d="M49.5 23 V30" stroke="#ddd" stroke-width="1"/><path d="M73.5 23 V30" stroke="#ddd" stroke-width="1"/><path d="M97.5 23 V30" stroke="#ddd" stroke-width="1"/><path d="M121.5 23 V30" stroke="#ddd" stroke-width="1"/><path d="M145.5 15 V19 M145.5 23 V27" stroke="#ddd" stroke-width="1"/><path d="M169.5 23 V30" stroke="#ddd" stroke-width="1"/><path d="M193.5 23 V30" stroke="#ddd" stroke-width="1"/><path d="M217.5 23 V30" stroke="#ddd" stroke-width="1"/><path d="M241.5 23 V30" stroke="#ddd" stroke-width="1"/><path d="M265.5 15 V19 M265.5 23 V27" stroke="#ddd" stroke-width="1"/><path d="M289.5 23 V30" stroke="#ddd" stroke-width="1"/><path d="M313.5 23 V30" stroke="#ddd" stroke-width="1"/><path d="M337.5 23 V30" stroke="#ddd" stroke-width="1"/><path d="M361.5 23 V30" stroke="#ddd" stroke-width="1"/><path d="M385.5 15 V19 M385.5 23 V27" stroke="#ddd" stroke-width="1"/><path d="M409.5 23 V30" stroke="#ddd" stroke-width="1"/><path d="M433.5 23 V30" stroke="#ddd" stroke-width="1"/><path d="M457.5 23 V30" stroke="#ddd" stroke-width="1"/><path d="M481.5 23 V30" stroke="#ddd" stroke-width="1"/><path d="M505.5 15 V19 M505.5 23 V27" stroke="#ddd" stroke-width="1"/><path d="M529.5 23 V30" stroke="#ddd" stroke-width="1"/><path d="M553.5 23 V30" stroke="#ddd" stroke-width="1"/><path d="M577.5 23 V30" stroke="#ddd" stroke-width="1"/><path d="M601.5 23 V30" stroke="#ddd" stroke-width="1"/><path d="M625.5 15 V19 M625.5 23 V27" stroke="#ddd" stroke-width="1"/><path d="M649.5 23 V30" stroke="#ddd" stroke-width="1"/><path d="M673.5 23 V30" stroke="#ddd" stroke-width="1"/><path d="M697.5 23 V30" stroke="#ddd" stroke-width="1"/><path d="M721.5 23 V30" stroke="#ddd" stroke-width="1"/><path d="M745.5 15 V19 M745.5 23 V27" stroke="#ddd" stroke-width="1"/><path d="M769.5 23 V30" stroke="#ddd" stroke-width="1"/><path d="M793.5 23 V30" stroke="#ddd" stroke-width="1"/><path d="M817.5 23 V30" stroke="#ddd" stroke-width="1"/><path d="M841.5 23 V30" stroke="#ddd" stroke-width="1"/><path d="M865.5 15 V19 M865.5 23 V27" stroke="#ddd" stroke-width="1"/><path d="M889.5 23 V30" stroke="#ddd" stroke-width="1"/><path d="M913.5 23 V30" stroke="#ddd" stroke-width="1"/><path d="M937.5 23 V30" stroke="#ddd" stroke-width="1"/><path d="M961.5 23 V30" stroke="#ddd" stroke-width="1"/><path d="M985.5 15 V19 M985.5 23 V27" stroke="#ddd" stroke-width="1"/><path d="M1009.5 23 V30" stroke="#ddd" stroke-width="1"/></svg>
<div class="t" style="left:590px;top:799px;width:20px;text-align:center;font-size:10px;line-height:12px;color:#ccc">0</div>
<div class="t" style="left:710px;top:799px;width:20px;text-align:center;font-size:10px;line-height:12px;color:#ccc">1</div>
<div class="t" style="left:830px;top:799px;width:20px;text-align:center;font-size:10px;line-height:12px;color:#ccc">2</div>
<div class="t" style="left:950px;top:799px;width:20px;text-align:center;font-size:10px;line-height:12px;color:#ccc">3</div>
<div class="t" style="left:1070px;top:799px;width:20px;text-align:center;font-size:10px;line-height:12px;color:#ccc">4</div>
<div class="t" style="left:1190px;top:799px;width:20px;text-align:center;font-size:10px;line-height:12px;color:#ccc">5</div>
<div class="t" style="left:1310px;top:799px;width:20px;text-align:center;font-size:10px;line-height:12px;color:#ccc">6</div>
<div class="t" style="left:1430px;top:799px;width:20px;text-align:center;font-size:10px;line-height:12px;color:#ccc">7</div>
<div class="t" style="left:1550px;top:799px;width:20px;text-align:center;font-size:10px;line-height:12px;color:#ccc">8</div>
<div class="abs" style="left:600px;top:858px;width:486px;height:18px;background:#0b71e6;"></div>
<div class="abs" style="left:596px;top:863px;width:8px;height:8px;background:#fff;transform:rotate(45deg)"></div>
<div class="abs" style="left:1080px;top:863px;width:8px;height:8px;background:#fff;transform:rotate(45deg)"></div>
<div class="abs" style="left:722px;top:884px;width:362px;height:18px;background:#0b71e6;"></div>
<div class="abs" style="left:718px;top:889px;width:8px;height:8px;background:#fff;transform:rotate(45deg)"></div>
<div class="abs" style="left:1078px;top:889px;width:8px;height:8px;background:#fff;transform:rotate(45deg)"></div>
<div class="abs" style="left:600px;top:910px;width:362px;height:18px;background:#0b71e6;"></div>
<div class="abs" style="left:596px;top:915px;width:8px;height:8px;background:#fff;transform:rotate(45deg)"></div>
<div class="abs" style="left:956px;top:915px;width:8px;height:8px;background:#fff;transform:rotate(45deg)"></div>
<div class="abs" style="left:720px;top:936px;width:362px;height:18px;background:#0b71e6;"></div>
<div class="abs" style="left:716px;top:941px;width:8px;height:8px;background:#fff;transform:rotate(45deg)"></div>
<div class="abs" style="left:1076px;top:941px;width:8px;height:8px;background:#fff;transform:rotate(45deg)"></div>
<div class="abs" style="left:624px;top:812px;width:4px;height:10px;background:#f4f4f4;border-radius:1px"></div>
<div class="abs" style="left:625px;top:812px;width:2px;height:139px;background:#f4f4f4;"></div>
<div class="abs" style="left:621px;top:108px;width:602px;height:603px;border:2px solid #e6375f"></div>
<div class="t" style="left:814px;top:155px;font-size:24px;line-height:28px;color:#1c1c1c;font-weight:300;">插入相同模型</div>
<div class="abs" style="left:814px;top:210px;width:54px;height:28px;border:1.5px solid #f06a1e;background:#fff"></div>
<div class="t" style="left:817px;top:214px;font-size:16px;line-height:20px;color:#111;font-weight:500;">主模型</div>
<svg style="left:293px;top:108px;" width="1257" height="603" viewBox="0 0 1257 603"><path d="M455 573 L757 569 L963 344" fill="none" stroke="#4bb3ea" stroke-width="1.2"/></svg>
<svg style="left:780px;top:270px" width="300" height="300" viewBox="780 270 300 300"><defs>
<linearGradient id="vb" x1="0" y1="0.3" x2="1" y2="0.7"><stop offset="0" stop-color="#c7b6b6"/><stop offset="0.3" stop-color="#e8dcdc"/><stop offset="0.6" stop-color="#dccdcd"/><stop offset="1" stop-color="#b9a7a7"/></linearGradient>
<linearGradient id="vf" x1="0.2" y1="1" x2="0.8" y2="0"><stop offset="0" stop-color="#c4b4b4"/><stop offset="0.5" stop-color="#ab9b9b"/><stop offset="1" stop-color="#958585"/></linearGradient>
<linearGradient id="vi" x1="0.8" y1="0" x2="0.3" y2="1"><stop offset="0" stop-color="#6f6060"/><stop offset="0.35" stop-color="#b9a9a9"/><stop offset="0.7" stop-color="#eadcdc"/><stop offset="1" stop-color="#f2e6e6"/></linearGradient>
<linearGradient id="vblue" x1="0" y1="0" x2="1" y2="0.8"><stop offset="0" stop-color="#5ab4f2"/><stop offset="0.45" stop-color="#2a8fe0"/><stop offset="1" stop-color="#0f64b6"/></linearGradient>
<linearGradient id="vring" x1="0" y1="0" x2="0" y2="1"><stop offset="0" stop-color="#a4a8ac"/><stop offset="0.5" stop-color="#7a7e82"/><stop offset="1" stop-color="#8e9296"/></linearGradient>
<clipPath id="bore"><ellipse cx="996" cy="396" rx="45.5" ry="63.5" transform="rotate(29 996 396)"/></clipPath>
</defs><ellipse cx="867.8" cy="514.5" rx="63.3" ry="35.3" fill="none" stroke="#7f8387" stroke-width="9"/><ellipse cx="867.8" cy="512.5" rx="63.3" ry="35.3" fill="none" stroke="#b4b8bc" stroke-width="2.2"/><path d="M831 479 L836 485 L866 497 L868 489 Z" fill="#8c9094"/><path d="M876 491 L930 507 L928 513 L874 500 Z" fill="#9fa3a7"/><path d="M862 497 L878 503 L846 543 L837 541 Z" fill="#c3c6c9"/><path d="M900.5 408.5 L900.6 404.6 L900.9 400.7 L901.4 396.8 L902.0 392.7 L902.9 388.6 L903.8 384.5 L905.0 380.4 L906.2 376.3 L907.7 372.1 L909.3 368.0 L911.0 363.9 L912.8 359.8 L914.8 355.8 L917.0 351.8 L919.2 347.9 L921.6 344.1 L924.0 340.4 L926.6 336.7 L929.3 333.2 L932.0 329.8 L934.8 326.5 L937.8 323.4 L940.7 320.4 L943.7 317.5 L946.8 314.8 L949.9 312.3 L953.1 310.0 L956.2 307.8 L959.4 305.8 L962.6 304.1 L965.8 302.5 L969.0 301.1 L972.1 299.9 L975.2 299.0 L978.3 298.2 L981.4 297.7 L984.3 297.4 L987.2 297.3 L990.1 297.4 L992.9 297.7 L995.5 298.3 L998.1 299.0 L1000.6 300.0 L1003.0 301.2 L1008.9 304.5 L1011.1 305.9 L1013.3 307.5 L1015.3 309.3 L1017.2 311.3 L1018.9 313.5 L1020.5 315.8 L1022.0 318.3 L1023.3 321.0 L1024.5 323.9 L1025.5 326.9 L1026.3 330.1 L1027.0 333.3 L1027.5 336.8 L1027.8 340.3 L1028.0 343.9 L1028.0 347.7 L1027.9 351.5 L1027.6 355.4 L1027.1 359.4 L1026.4 363.4 L1025.6 367.5 L1024.7 371.6 L1023.5 375.7 L1022.2 379.9 L1020.8 384.0 L1019.2 388.1 L1017.5 392.3 L1015.6 396.3 L1013.6 400.4 L1011.5 404.3 L1009.3 408.2 L1006.9 412.1 L1004.5 415.8 L1001.9 419.4 L999.2 423.0 L996.5 426.4 L993.6 429.6 L990.7 432.8 L987.8 435.8 L984.7 438.6 L981.7 441.3 L978.5 443.9 L975.4 446.2 L972.2 448.3 L969.1 450.3 L965.9 452.1 L962.7 453.7 L959.5 455.1 L956.4 456.2 L953.2 457.2 L950.2 457.9 L947.1 458.5 L944.1 458.8 L941.2 458.9 L938.4 458.8 L935.6 458.4 L932.9 457.9 L930.4 457.1 L927.9 456.1 L925.5 455.0 L919.6 451.6 L917.3 450.2 L915.2 448.6 L913.2 446.9 L911.3 444.9 L909.5 442.7 L907.9 440.3 L906.5 437.8 L905.2 435.1 L904.0 432.3 L903.0 429.2 L902.2 426.1 L901.5 422.8 L901.0 419.4 L900.6 415.9 L900.5 412.2 Z" fill="#cdbebe" /><ellipse cx="961.3" cy="376.4" rx="50.7" ry="86" transform="rotate(29 961.3 376.4)" fill="#a89898" /><path d="M914.9 407.3 L915.0 404.0 L915.3 400.7 L915.7 397.2 L916.2 393.8 L916.9 390.3 L917.8 386.8 L918.7 383.2 L919.8 379.6 L921.1 376.1 L922.4 372.5 L923.9 369.0 L925.5 365.5 L927.2 362.0 L929.0 358.6 L931.0 355.2 L933.0 352.0 L935.1 348.8 L937.3 345.6 L939.6 342.6 L942.0 339.6 L944.4 336.8 L946.9 334.1 L949.5 331.6 L952.1 329.1 L954.7 326.8 L957.4 324.6 L960.1 322.6 L962.8 320.8 L965.6 319.1 L968.3 317.5 L971.0 316.2 L973.8 315.0 L976.5 314.0 L979.2 313.2 L981.8 312.5 L984.4 312.1 L987.0 311.8 L989.5 311.7 L992.0 311.8 L994.3 312.1 L996.6 312.6 L998.9 313.2 L1001.0 314.0 L1003.0 315.1 L1025.0 327.5 L1026.9 328.7 L1028.7 330.1 L1030.5 331.6 L1032.1 333.3 L1033.6 335.2 L1035.0 337.2 L1036.2 339.4 L1037.4 341.7 L1038.4 344.2 L1039.2 346.8 L1039.9 349.5 L1040.5 352.3 L1041.0 355.2 L1041.3 358.3 L1041.4 361.4 L1041.4 364.6 L1041.3 367.9 L1041.0 371.3 L1040.6 374.7 L1040.0 378.2 L1039.3 381.7 L1038.5 385.2 L1037.5 388.8 L1036.4 392.3 L1035.2 395.9 L1033.8 399.4 L1032.4 403.0 L1030.8 406.5 L1029.0 409.9 L1027.2 413.4 L1025.3 416.7 L1023.3 420.0 L1021.1 423.2 L1018.9 426.3 L1016.6 429.4 L1014.3 432.3 L1011.9 435.1 L1009.4 437.8 L1006.8 440.4 L1004.2 442.9 L1001.5 445.2 L998.9 447.3 L996.2 449.4 L993.4 451.2 L990.7 452.9 L988.0 454.4 L985.2 455.8 L982.5 457.0 L979.8 458.0 L977.1 458.8 L974.5 459.4 L971.9 459.9 L969.3 460.2 L966.8 460.3 L964.3 460.2 L962.0 459.9 L959.6 459.4 L957.4 458.8 L955.3 457.9 L953.2 456.9 L931.3 444.4 L929.4 443.2 L927.5 441.9 L925.8 440.3 L924.2 438.6 L922.7 436.8 L921.3 434.7 L920.0 432.6 L918.9 430.2 L917.9 427.8 L917.1 425.2 L916.3 422.5 L915.8 419.7 L915.3 416.7 L915.0 413.7 L914.9 410.5 Z" fill="url(#vb)" /><path d="M965 307 L972 303 L1004 316 L992 329 Z" fill="#b3a3a3"/><path d="M965 307 L992 329 L991 334 L964 313 Z" fill="#857575"/><circle cx="905.6" cy="403.2" r="1.5" fill="#f2ecec"/><circle cx="908.2" cy="387.2" r="1.5" fill="#f2ecec"/><circle cx="913.6" cy="370.6" r="1.5" fill="#f2ecec"/><circle cx="921.3" cy="354.2" r="1.5" fill="#f2ecec"/><circle cx="931.1" cy="339.0" r="1.5" fill="#f2ecec"/><circle cx="942.3" cy="325.7" r="1.5" fill="#f2ecec"/><circle cx="954.5" cy="314.9" r="1.5" fill="#f2ecec"/><circle cx="967.1" cy="307.2" r="1.5" fill="#f2ecec"/><circle cx="979.3" cy="303.0" r="1.5" fill="#f2ecec"/><circle cx="990.7" cy="302.4" r="1.5" fill="#f2ecec"/><ellipse cx="926" cy="414" rx="10" ry="14" transform="rotate(29 926 414)" fill="#d8caca" /><ellipse cx="907" cy="426" rx="15" ry="21" transform="rotate(25 907 426)" fill="#7a5a2c" /><ellipse cx="905" cy="428" rx="10" ry="15" transform="rotate(25 905 428)" fill="#5a4322" /><circle cx="904" cy="429" r="4" fill="#3a3f44"/><path d="M926.6 423.3 L926.8 419.5 L927.1 415.6 L927.6 411.6 L928.2 407.6 L929.0 403.5 L930.0 399.4 L931.1 395.3 L932.4 391.1 L933.8 387.0 L935.4 382.9 L937.1 378.8 L939.0 374.7 L941.0 370.7 L943.1 366.7 L945.4 362.8 L947.7 359.0 L950.2 355.2 L952.8 351.6 L955.4 348.1 L958.2 344.7 L961.0 341.4 L963.9 338.2 L966.9 335.2 L969.9 332.4 L973.0 329.7 L976.1 327.2 L979.2 324.8 L982.4 322.7 L985.6 320.7 L988.8 318.9 L992.0 317.4 L995.1 316.0 L998.3 314.8 L1001.4 313.9 L1004.5 313.1 L1007.5 312.6 L1010.5 312.2 L1013.4 312.1 L1016.3 312.3 L1019.0 312.6 L1021.7 313.1 L1024.3 313.9 L1026.8 314.9 L1029.2 316.1 L1035.7 319.8 L1038.0 321.2 L1040.1 322.8 L1042.1 324.6 L1044.0 326.5 L1045.8 328.7 L1047.4 331.1 L1048.8 333.6 L1050.1 336.3 L1051.3 339.1 L1052.3 342.1 L1053.1 345.3 L1053.8 348.6 L1054.3 352.0 L1054.7 355.6 L1054.8 359.2 L1054.8 362.9 L1054.7 366.8 L1054.4 370.7 L1053.9 374.6 L1053.2 378.7 L1052.4 382.8 L1051.5 386.9 L1050.3 391.0 L1049.1 395.1 L1047.6 399.3 L1046.0 403.4 L1044.3 407.5 L1042.5 411.6 L1040.5 415.6 L1038.3 419.6 L1036.1 423.5 L1033.7 427.3 L1031.3 431.0 L1028.7 434.7 L1026.0 438.2 L1023.3 441.6 L1020.5 444.9 L1017.5 448.1 L1014.6 451.1 L1011.6 453.9 L1008.5 456.6 L1005.4 459.1 L1002.2 461.4 L999.0 463.6 L995.9 465.6 L992.7 467.3 L989.5 468.9 L986.3 470.3 L983.2 471.5 L980.1 472.4 L977.0 473.2 L974.0 473.7 L971.0 474.0 L968.0 474.1 L965.2 474.0 L962.4 473.7 L959.8 473.1 L957.2 472.4 L954.7 471.4 L952.3 470.2 L945.8 466.5 L943.5 465.1 L941.4 463.5 L939.3 461.7 L937.5 459.7 L935.7 457.6 L934.1 455.2 L932.6 452.7 L931.3 450.0 L930.2 447.1 L929.2 444.1 L928.3 441.0 L927.7 437.7 L927.1 434.3 L926.8 430.7 L926.6 427.1 Z" fill="#cbbaba" /><ellipse cx="994" cy="395" rx="50.7" ry="86" transform="rotate(29 994 395)" fill="url(#vf)" /><ellipse cx="996" cy="396" rx="49" ry="68" transform="rotate(29 996 396)" fill="#c6b6b6" /><ellipse cx="996" cy="396" rx="47.5" ry="66" transform="rotate(29 996 396)" fill="#a39393" /><ellipse cx="996" cy="396" rx="45.5" ry="63.5" transform="rotate(29 996 396)" fill="url(#vi)" /><g clip-path="url(#bore)"><ellipse cx="972" cy="402" rx="34" ry="62" transform="rotate(29 972 402)" fill="#8e8f90" /><ellipse cx="976" cy="400" rx="26" ry="52" transform="rotate(29 976 400)" fill="none" stroke="#aeb0b2" stroke-width="1"/></g><path d="M952 401 L1024 357" stroke="#9fa9b1" stroke-width="4" stroke-linecap="round"/><path d="M952 400 L1024 356" stroke="#c4ccd2" stroke-width="1.2"/><path d="M1004 356 L1020 348 L1025 360 L1009 368 Z" fill="#cfd2d4"/><path d="M1000 340 L1007 336 L1016 352 L1009 356 Z" fill="#b9bcbe"/><path d="M1010 364 L1016 360 L1004 392 L998 396 Z" fill="#aeb1b3"/><circle cx="1031.6" cy="327.2" r="1.8" fill="#f4eeee"/><circle cx="1039.2" cy="333.7" r="1.8" fill="#f4eeee"/><circle cx="1044.6" cy="343.2" r="1.8" fill="#f4eeee"/><circle cx="1047.5" cy="355.4" r="1.8" fill="#f4eeee"/><circle cx="1047.7" cy="369.5" r="1.8" fill="#f4eeee"/><circle cx="1045.1" cy="384.9" r="1.8" fill="#f4eeee"/><circle cx="1040.0" cy="400.8" r="1.8" fill="#f4eeee"/><circle cx="1032.7" cy="416.4" r="1.8" fill="#f4eeee"/><circle cx="1023.3" cy="431.0" r="1.8" fill="#f4eeee"/><circle cx="1012.5" cy="443.7" r="1.8" fill="#f4eeee"/><circle cx="1000.8" cy="454.0" r="1.8" fill="#f4eeee"/><circle cx="988.7" cy="461.4" r="1.8" fill="#f4eeee"/><circle cx="976.9" cy="465.4" r="1.8" fill="#f4eeee"/><circle cx="966.0" cy="465.9" r="1.8" fill="#f4eeee"/><circle cx="956.4" cy="462.8" r="1.8" fill="#f4eeee"/><circle cx="948.8" cy="456.3" r="1.8" fill="#f4eeee"/><circle cx="943.4" cy="446.8" r="1.8" fill="#f4eeee"/><circle cx="940.5" cy="434.6" r="1.8" fill="#f4eeee"/><circle cx="940.3" cy="420.5" r="1.8" fill="#f4eeee"/><circle cx="942.9" cy="405.1" r="1.8" fill="#f4eeee"/><circle cx="948.0" cy="389.2" r="1.8" fill="#f4eeee"/><circle cx="955.3" cy="373.6" r="1.8" fill="#f4eeee"/><circle cx="964.7" cy="359.0" r="1.8" fill="#f4eeee"/><circle cx="975.5" cy="346.3" r="1.8" fill="#f4eeee"/><circle cx="987.2" cy="336.0" r="1.8" fill="#f4eeee"/><circle cx="999.3" cy="328.6" r="1.8" fill="#f4eeee"/><circle cx="1011.1" cy="324.6" r="1.8" fill="#f4eeee"/><circle cx="1022.0" cy="324.1" r="1.8" fill="#f4eeee"/><path d="M828.7 463.0 L828.7 461.8 L828.8 460.5 L828.9 459.3 L829.1 458.0 L829.3 456.8 L829.6 455.5 L830.0 454.3 L830.4 453.1 L830.8 451.8 L831.3 450.6 L831.9 449.5 L832.5 448.3 L833.2 447.2 L833.9 446.1 L834.6 445.0 L835.4 444.0 L836.2 443.0 L837.1 442.0 L838.0 441.1 L839.0 440.2 L839.9 439.4 L840.9 438.7 L841.9 438.0 L843.0 437.3 L844.0 436.7 L878.0 417.7 L879.1 417.2 L880.2 416.7 L881.3 416.3 L882.4 415.9 L883.5 415.6 L884.6 415.4 L885.8 415.2 L886.9 415.1 L888.0 415.1 L889.0 415.1 L890.1 415.2 L891.2 415.4 L892.2 415.6 L893.2 415.9 L894.2 416.2 L895.2 416.7 L896.1 417.1 L897.0 417.7 L897.9 418.3 L898.7 418.9 L899.5 419.6 L900.2 420.4 L900.9 421.2 L901.6 422.1 L902.2 423.0 L902.7 423.9 L903.2 424.9 L903.7 425.9 L904.1 427.0 L904.4 428.1 L904.7 429.2 L904.9 430.4 L905.1 431.6 L905.2 432.8 L905.3 434.0 L905.3 435.2 L905.2 436.5 L905.1 437.7 L904.9 439.0 L904.7 440.2 L904.4 441.5 L904.0 442.7 L903.6 443.9 L903.2 445.2 L902.7 446.4 L902.1 447.5 L901.5 448.7 L900.8 449.8 L900.1 450.9 L899.4 452.0 L898.6 453.0 L897.8 454.0 L896.9 455.0 L896.0 455.9 L895.0 456.8 L894.1 457.6 L893.1 458.3 L892.1 459.0 L891.0 459.7 L890.0 460.3 L856.0 479.3 L854.9 479.8 L853.8 480.3 L852.7 480.7 L851.6 481.1 L850.5 481.4 L849.4 481.6 L848.2 481.8 L847.1 481.9 L846.0 481.9 L845.0 481.9 L843.9 481.8 L842.8 481.6 L841.8 481.4 L840.8 481.1 L839.8 480.8 L838.8 480.3 L837.9 479.9 L837.0 479.3 L836.1 478.7 L835.3 478.1 L834.5 477.4 L833.8 476.6 L833.1 475.8 L832.4 474.9 L831.8 474.0 L831.3 473.1 L830.8 472.1 L830.3 471.1 L829.9 470.0 L829.6 468.9 L829.3 467.8 L829.1 466.6 L828.9 465.4 L828.8 464.2 Z" fill="url(#vblue)" /><ellipse cx="884" cy="439" rx="20" ry="25" transform="rotate(29 884 439)" fill="#2088dc" opacity="0.5"/><g stroke="#8fd0f8" stroke-width="0.7" opacity="0.35"><path d="M876 446 L868 428 M876 446 L880 424 M876 446 L890 428 M876 446 L896 440 M876 446 L894 456 M876 446 L862 440"/></g><circle cx="888" cy="428" r="1.5" fill="#40e0d0"/><circle cx="897" cy="452" r="1.5" fill="#40e0d0"/><circle cx="870" cy="468" r="1.5" fill="#40e0d0"/><path d="M848 486 L887 486 L885 500 Q867 508 850 500 Z" fill="#7a7e82"/><ellipse cx="867.5" cy="486" rx="19.5" ry="7" transform="rotate(0 867.5 486)" fill="#8e9296" /><path d="M855 470 L890 452 L888 486 Q868 494 852 486 Z" fill="url(#vblue)"/><ellipse cx="850" cy="458" rx="19.5" ry="24.5" transform="rotate(29 850 458)" fill="#9c9898" /><ellipse cx="848.5" cy="456.5" rx="18" ry="23" transform="rotate(29 848.5 456.5)" fill="#b9b4b4" /><circle cx="849.5" cy="459.5" r="2.6" fill="#e4ecf4"/></svg>
<svg style="left:293px;top:108px;" width="1257" height="603" viewBox="0 0 1257 603"><path d="M575 112.5 H593 L663.5 232" fill="none" stroke="#f07f2e" stroke-width="1.2"/><circle cx="663.5" cy="232.5" r="2.3" fill="#f7931e"/></svg>

<svg style="left:1430px;top:115px" width="120" height="115" viewBox="1430 115 120 115">
<path d="M1490 142 L1527 156 L1520 198 L1490 221 L1460 198 L1452 156 Z" fill="rgba(245,250,255,0.45)" stroke="rgba(190,196,206,0.55)" stroke-width="1"/>
<path d="M1490 178 L1452 156 M1490 178 L1527 156 M1490 178 V221" stroke="#acb3bc" stroke-width="1.5" stroke-dasharray="5 4" fill="none"/>
<path d="M1483 174 L1490 170 L1497 174 L1497 182 L1490 186 L1483 182 Z" fill="rgba(230,220,255,0.6)"/>
<path d="M1490 178 V135" stroke="#4cd964" stroke-width="1"/><rect x="1488" y="136" width="4" height="4" fill="#4cd964"/>
<path d="M1490 178 L1452 200" stroke="#4a6cf5" stroke-width="1"/><path d="M1451 197 L1450.5 202 L1456 201.5 Z" fill="#4a6cf5"/>
<path d="M1490 178 L1528 200" stroke="#ef5a67" stroke-width="1"/><path d="M1529 197 L1529.5 202 L1524 201.5 Z" fill="#ef5a67"/>
<text x="1485.5" y="129" font-size="10" fill="#b9bfc8" font-family="Liberation Sans">Y</text>
<text x="1439.5" y="208" font-size="10" fill="#b9bfc8" font-family="Liberation Sans">Z</text>
<text x="1531.5" y="208" font-size="10" fill="#b9bfc8" font-family="Liberation Sans">X</text>
<text font-size="11" fill="#66707b" transform="matrix(1.1,0.42,-0.85,0.45,1477,157)">上</text>
<text font-size="11" fill="#66707b" transform="matrix(1.0,0.6,0,1.2,1464.5,190.5)">前</text>
<text font-size="11" fill="#66707b" transform="matrix(1.1,-0.6,0,1.2,1501,200)">右</text>
</svg>

</div>
</body></html>
